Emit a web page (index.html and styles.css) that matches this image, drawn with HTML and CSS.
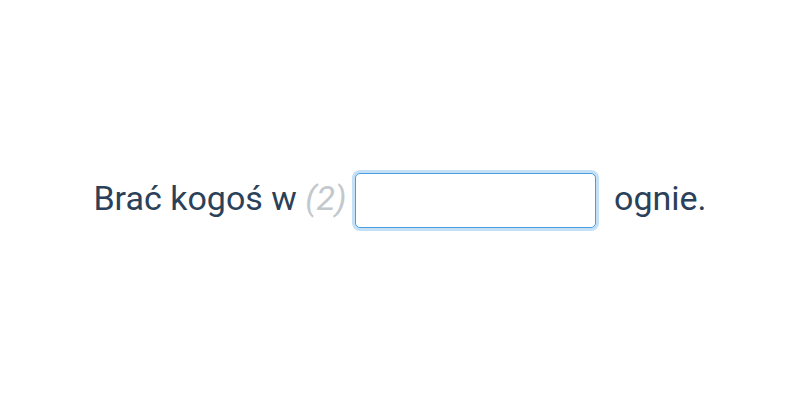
FILE: index.html
```html
<!DOCTYPE html>
<html lang="pl">
<head>
  <meta charset="UTF-8">
  <title>Uzupełnij</title>
  <link rel="stylesheet" href="styles.css">
</head>
<body>
  <div class="task">
    <p class="sentence">
      Brać kogoś w <span class="hint">(2)</span><input class="gap" type="text" aria-label="odpowiedź"> ognie.
    </p>
  </div>
</body>
</html>
```

FILE: styles.css
```css
body {
  margin: 0;
  background: #ffffff;
  font-family: Roboto, "Noto Sans", sans-serif;
  color: #2b4159;
}

.task {
  height: 400px;
  display: flex;
  align-items: center;
  justify-content: center;
}

.sentence {
  margin: 0 0 2px;
  font-size: 34px;
  line-height: 56px;
}

.hint {
  color: #c3c8cc;
  font-style: italic;
}

.gap {
  width: 241px;
  height: 55px;
  box-sizing: border-box;
  margin: 0 10px 0 8px;
  vertical-align: middle;
  border: 1px solid #4a9ee0;
  border-radius: 5px;
  box-shadow: 0 0 0 3px #c4e0f7;
  outline: none;
  font: inherit;
  padding: 0 10px;
}
```
